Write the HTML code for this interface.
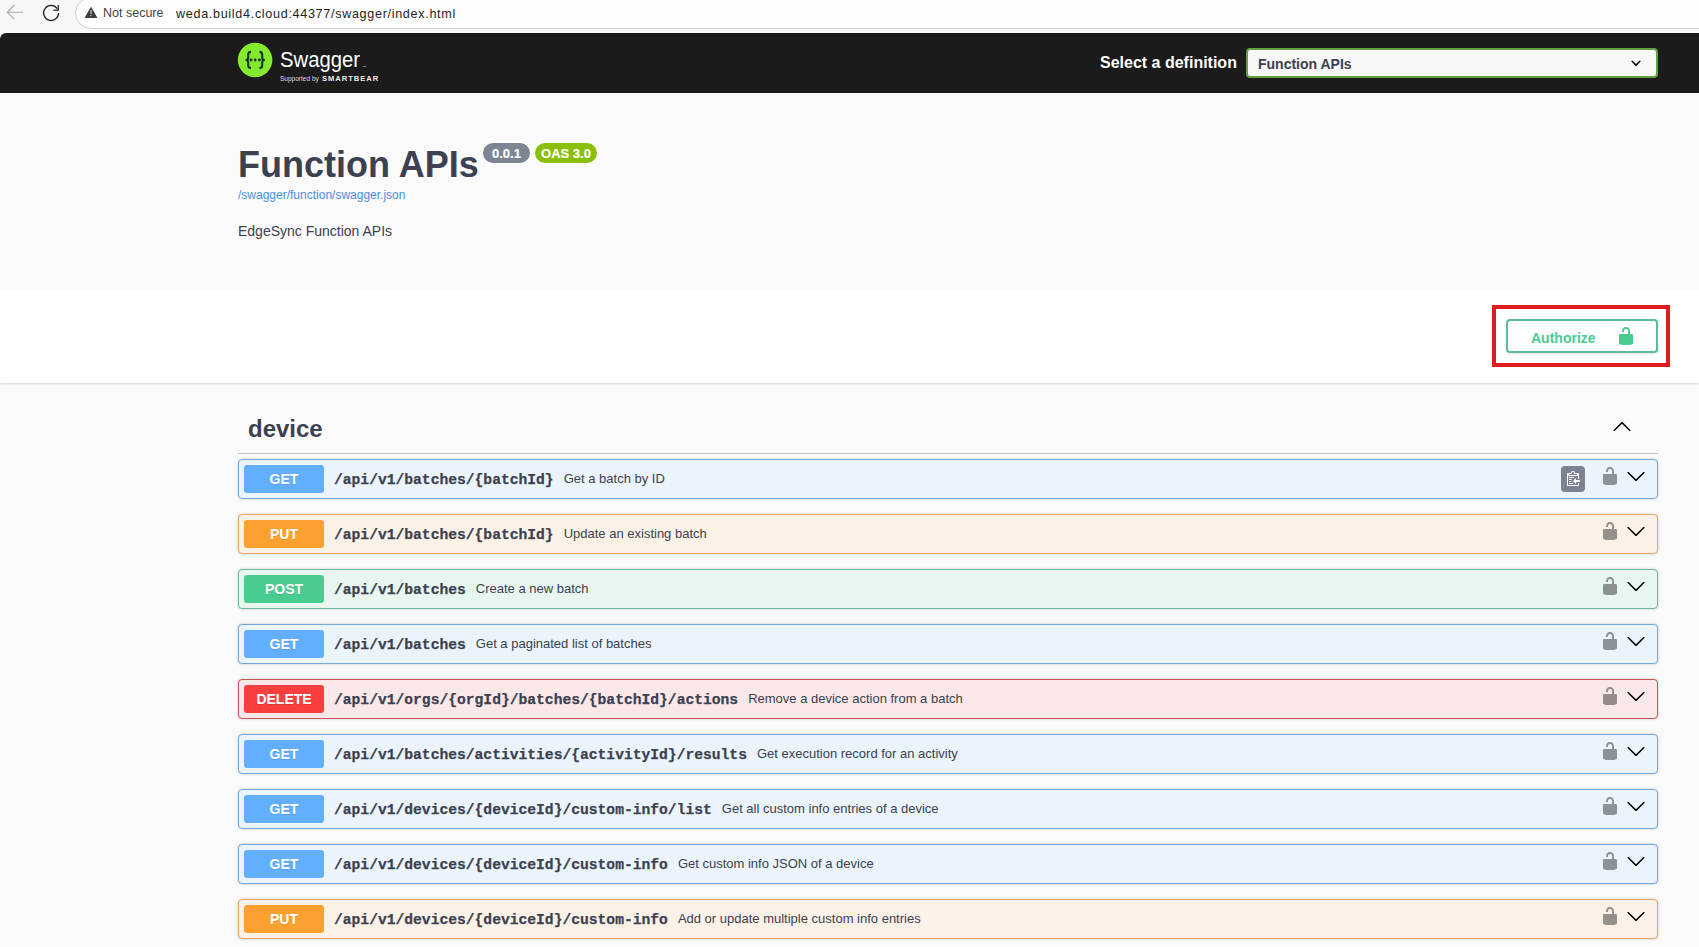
<!DOCTYPE html>
<html><head><meta charset="utf-8">
<style>
*{box-sizing:border-box}
html,body{margin:0;padding:0}
body{width:1699px;height:947px;overflow:hidden;position:relative;background:#fafafa;font-family:"Liberation Sans",sans-serif;color:#3b4151}
.abs{position:absolute}
#chrome{left:0;top:0;width:1699px;height:33px;background:#f7f7f7}
#pill{left:75px;top:-3px;width:1700px;height:32px;border:1px solid #cfcfcf;border-radius:16px;background:#fdfdfd}
#ns{left:103px;top:6px;font-size:12.5px;color:#444;white-space:nowrap}
#url{left:176px;top:7px;font-size:12.6px;letter-spacing:.68px;color:#1f1f1f;white-space:nowrap}
#topbar{left:0;top:33px;width:1699px;height:60px;background:#1b1b1b;border-top-left-radius:6px}
#sellabel{left:1100px;top:54px;font-size:16px;font-weight:bold;color:#fff;white-space:nowrap}
#select{left:1246px;top:48px;width:412px;height:30px;border:2px solid #62a03f;border-radius:4px;background:#f7f7f7}
#seltext{left:1258px;top:56px;font-size:14px;font-weight:bold;color:#3b4151;white-space:nowrap}
#title{left:238px;top:143px;font-size:36px;font-weight:bold;color:#3b4151;white-space:nowrap;line-height:44px}
.badge{top:143px;height:20px;border-radius:57px;color:#fff;font-size:13px;font-weight:bold;text-align:center;line-height:22px;-webkit-text-stroke:.2px #fff}
#b1{left:483px;width:47px;background:#7d8492}
#b2{left:535px;width:62px;background:#89bf04}
#link{left:238px;top:188px;font-size:12px;color:#4990e2;white-space:nowrap}
#desc{left:238px;top:223px;font-size:14px;color:#3b4151;white-space:nowrap}
#scheme{left:0;top:289px;width:1699px;height:94px;background:#fff;box-shadow:0 1px 2px 0 rgba(0,0,0,.15)}
#redbox{left:1492px;top:305px;width:178px;height:62px;border:4px solid #dc1d22}
#auth{left:1506px;top:319px;width:152px;height:34px;border:2px solid #5cbc98;border-radius:4px;box-shadow:0 1px 2px rgba(0,0,0,.1);background:#fff}
#authtext{left:1531px;top:330px;font-size:14px;font-weight:bold;color:#49cc90;white-space:nowrap}
#tag{left:248px;top:415px;font-size:24px;font-weight:bold;color:#3b4151;white-space:nowrap}
#tagline{left:238px;top:453px;width:1420px;height:1px;background:rgba(59,65,81,.3)}
.op{left:238px;width:1420px;height:40px;border:1px solid;border-radius:4px;box-shadow:0 0 3px rgba(0,0,0,.19)}
.get{background:#ebf3fb;border-color:#74a9e0}
.put{background:#fbf1e6;border-color:#e0a765}
.post{background:#e8f6f0;border-color:#68b89a}
.del{background:#fae7e7;border-color:#cc5256}
.m{position:absolute;left:5px;top:5px;width:80px;height:28px;border-radius:3px;color:#fff;font-size:14px;font-weight:bold;text-align:center;line-height:28px;text-shadow:0 1px 0 rgba(0,0,0,.1)}
.get .m{background:#61affe}.put .m{background:#fca130}.post .m{background:#49cc90}.del .m{background:#f93e3e}
.p{position:absolute;left:95px;top:12px;font-family:"Liberation Mono",monospace;font-size:14.65px;font-weight:bold;color:#3b4151;white-space:nowrap;-webkit-text-stroke:.25px #3b4151}
.d{font-family:"Liberation Sans",sans-serif;font-weight:normal;font-size:13px;margin-left:10px;-webkit-text-stroke:0;position:relative;top:-1px}
.lock{position:absolute;left:1361px;top:6px}
.chev{position:absolute;left:1387px;top:6px}
.copy{position:absolute;left:1322px;top:6px;width:24px;height:26px;border-radius:4px;background:#7d8293}
</style></head><body>
<div id="chrome" class="abs"></div>
<div id="pill" class="abs"></div>
<svg class="abs" style="left:0;top:0" width="75" height="33" viewBox="0 0 75 33">
<path d="M23 12.3H7.6M14.3 5L7.3 12.3l7 7" fill="none" stroke="#a8a8a8" stroke-width="1.1"/>
<path d="M57.2 8.6A7.5 7.5 0 1 0 58.6 13" fill="none" stroke="#1f1f1f" stroke-width="1.25"/>
<path d="M58.3 5v5H53.3" fill="none" stroke="#1f1f1f" stroke-width="1.25"/>
</svg>
<svg class="abs" style="left:84px;top:6px" width="14" height="13" viewBox="0 0 14 13"><path d="M7 1.8L12.5 11.5H1.5z" fill="#3c3c3c" stroke="#3c3c3c" stroke-width="1.2" stroke-linejoin="round"/><rect x="6.2" y="4" width="1.6" height="4" fill="#aaa"/><rect x="6.2" y="8.9" width="1.6" height="1.3" fill="#aaa"/></svg>
<div id="ns" class="abs">Not secure</div>
<div id="url" class="abs">weda.build4.cloud:44377/swagger/index.html</div>
<div id="topbar" class="abs"></div>
<div id="sellabel" class="abs">Select a definition</div>
<div id="select" class="abs"></div>
<div id="seltext" class="abs">Function APIs</div>
<div id="title" class="abs">Function APIs</div>
<div id="b1" class="abs badge">0.0.1</div>
<div id="b2" class="abs badge">OAS 3.0</div>
<div id="link" class="abs">/swagger/function/swagger.json</div>
<div id="desc" class="abs">EdgeSync Function APIs</div>
<div id="scheme" class="abs"></div>
<div id="redbox" class="abs"></div>
<div id="auth" class="abs"></div>
<div id="authtext" class="abs">Authorize</div>
<svg class="abs" style="left:236px;top:40px" width="150" height="46" viewBox="0 0 150 46">
<circle cx="19.1" cy="20" r="17.3" fill="#85ea2d"/>
<path d="M15 11.9c-2.1 0-2.8 1-2.8 2.8v3c0 1.3-.7 2.2-2.6 2.3 1.9.1 2.6 1 2.6 2.3v3c0 1.8.7 2.8 2.8 2.8M23.4 11.9c2.1 0 2.8 1 2.8 2.8v3c0 1.3.7 2.2 2.6 2.3-1.9.1-2.6 1-2.6 2.3v3c0 1.8-.7 2.8-2.8 2.8" fill="none" stroke="#15352c" stroke-width="2.1"/>
<circle cx="15" cy="20" r="1.4" fill="#15352c"/><circle cx="19.2" cy="20" r="1.4" fill="#15352c"/><circle cx="23.4" cy="20" r="1.4" fill="#15352c"/>
<text x="44" y="27" font-family="Liberation Sans" font-size="22" fill="#fff" textLength="80" lengthAdjust="spacingAndGlyphs">Swagger</text>
<text x="126.5" y="26.5" font-family="Liberation Sans" font-size="2.4" fill="#fff">TM</text>
<text x="44" y="41.3" font-family="Liberation Sans" font-size="6.5" fill="#ddd" textLength="38.8" lengthAdjust="spacingAndGlyphs">Supported by</text>
<text x="86" y="41.3" font-family="Liberation Sans" font-size="7.6" font-weight="bold" fill="#eee" textLength="56.3" lengthAdjust="spacing">SMARTBEAR</text>
</svg>
<svg class="abs" style="left:1626px;top:53px" width="20" height="20" viewBox="0 0 20 20"><path d="M13.418 7.859a.695.695 0 0 1 .978 0 .68.68 0 0 1 0 .969l-3.908 3.83a.697.697 0 0 1-.979 0l-3.908-3.83a.68.68 0 0 1 0-.969.695.695 0 0 1 .978 0L10 11l3.418-3.141z"/></svg>
<svg class="abs" style="left:1616px;top:326px" width="20" height="20" viewBox="0 0 20 20"><path fill="#49cc90" d="M15.8 8H14V5.6C14 2.703 12.665 1 10 1 7.334 1 6 2.703 6 5.6V6h2v-.801C8 3.754 8.797 3 10 3c1.203 0 2 .754 2 2.199V8H4c-.553 0-1 .646-1 1.199V17c0 .549.428 1.139.951 1.307l1.197.387C5.672 18.861 6.55 19 7.1 19h5.8c.549 0 1.428-.139 1.951-.307l1.196-.387c.524-.167.953-.757.953-1.306V9.199C17 8.646 16.352 8 15.8 8z"/></svg>
<div id="tag" class="abs">device</div>
<div id="tagline" class="abs"></div>
<svg class="abs" style="left:1612px;top:416px" width="20" height="20" viewBox="0 0 20 20"><path d="M17.418 14.908c.272.268.709.268.979 0s.271-.701 0-.969l-7.908-7.83a.697.697 0 0 0-.979 0l-7.908 7.83c-.27.268-.27.701 0 .969.271.268.709.268.979 0L10 7.72l7.418 7.188z"/></svg>

<!--OPS-->
<div class="abs op get" style="top:459px"><div class="m">GET</div><div class="p">/api/v1/batches/{batchId}<span class="d">Get a batch by ID</span></div><div class="copy"><svg style="position:absolute;left:3.8px;top:5px" width="15" height="16" viewBox="0 0 15 16"><g transform="translate(2,-1)"><path fill="#fff" fill-rule="evenodd" d="M2 13h4v1H2v-1zm5-6H2v1h5V7zm2 3V8l-3 3 3 3v-2h5v-2H9zM4.5 9H2v1h2.5V9zM2 12h2.5v-1H2v1zm9 1h1v2c-.02.28-.11.52-.3.7-.19.18-.42.28-.7.3H1c-.55 0-1-.45-1-1V4c0-.55.45-1 1-1h3c0-1.110.89-2 2-2 1.11 0 2 .89 2 2h3c.55 0 1 .45 1 1v5h-1V6H1v9h10v-2zM2 5h8c0-.55-.45-1-1-1H8c-.55 0-1-.45-1-1s-.45-1-1-1-1 .45-1 1-.45 1-1 1H3c-.55 0-1 .45-1 1z"/></g></svg></div><svg class="lock" width="20" height="20" viewBox="0 0 20 20"><path opacity=".4" d="M15.8 8H14V5.6C14 2.703 12.665 1 10 1 7.334 1 6 2.703 6 5.6V6h2v-.801C8 3.754 8.797 3 10 3c1.203 0 2 .754 2 2.199V8H4c-.553 0-1 .646-1 1.199V17c0 .549.428 1.139.951 1.307l1.197.387C5.672 18.861 6.55 19 7.1 19h5.8c.549 0 1.428-.139 1.951-.307l1.196-.387c.524-.167.953-.757.953-1.306V9.199C17 8.646 16.352 8 15.8 8z"/></svg><svg class="chev" width="20" height="20" viewBox="0 0 20 20"><path d="M17.418 6.109c.272-.268.709-.268.979 0s.271.701 0 .969l-7.908 7.83c-.27.268-.707.268-.979 0l-7.908-7.83c-.27-.268-.27-.701 0-.969.271-.268.709-.268.979 0L10 13.25l7.418-7.141z"/></svg></div>
<div class="abs op put" style="top:514px"><div class="m">PUT</div><div class="p">/api/v1/batches/{batchId}<span class="d">Update an existing batch</span></div><svg class="lock" width="20" height="20" viewBox="0 0 20 20"><path opacity=".4" d="M15.8 8H14V5.6C14 2.703 12.665 1 10 1 7.334 1 6 2.703 6 5.6V6h2v-.801C8 3.754 8.797 3 10 3c1.203 0 2 .754 2 2.199V8H4c-.553 0-1 .646-1 1.199V17c0 .549.428 1.139.951 1.307l1.197.387C5.672 18.861 6.55 19 7.1 19h5.8c.549 0 1.428-.139 1.951-.307l1.196-.387c.524-.167.953-.757.953-1.306V9.199C17 8.646 16.352 8 15.8 8z"/></svg><svg class="chev" width="20" height="20" viewBox="0 0 20 20"><path d="M17.418 6.109c.272-.268.709-.268.979 0s.271.701 0 .969l-7.908 7.83c-.27.268-.707.268-.979 0l-7.908-7.83c-.27-.268-.27-.701 0-.969.271-.268.709-.268.979 0L10 13.25l7.418-7.141z"/></svg></div>
<div class="abs op post" style="top:569px"><div class="m">POST</div><div class="p">/api/v1/batches<span class="d">Create a new batch</span></div><svg class="lock" width="20" height="20" viewBox="0 0 20 20"><path opacity=".4" d="M15.8 8H14V5.6C14 2.703 12.665 1 10 1 7.334 1 6 2.703 6 5.6V6h2v-.801C8 3.754 8.797 3 10 3c1.203 0 2 .754 2 2.199V8H4c-.553 0-1 .646-1 1.199V17c0 .549.428 1.139.951 1.307l1.197.387C5.672 18.861 6.55 19 7.1 19h5.8c.549 0 1.428-.139 1.951-.307l1.196-.387c.524-.167.953-.757.953-1.306V9.199C17 8.646 16.352 8 15.8 8z"/></svg><svg class="chev" width="20" height="20" viewBox="0 0 20 20"><path d="M17.418 6.109c.272-.268.709-.268.979 0s.271.701 0 .969l-7.908 7.83c-.27.268-.707.268-.979 0l-7.908-7.83c-.27-.268-.27-.701 0-.969.271-.268.709-.268.979 0L10 13.25l7.418-7.141z"/></svg></div>
<div class="abs op get" style="top:624px"><div class="m">GET</div><div class="p">/api/v1/batches<span class="d">Get a paginated list of batches</span></div><svg class="lock" width="20" height="20" viewBox="0 0 20 20"><path opacity=".4" d="M15.8 8H14V5.6C14 2.703 12.665 1 10 1 7.334 1 6 2.703 6 5.6V6h2v-.801C8 3.754 8.797 3 10 3c1.203 0 2 .754 2 2.199V8H4c-.553 0-1 .646-1 1.199V17c0 .549.428 1.139.951 1.307l1.197.387C5.672 18.861 6.55 19 7.1 19h5.8c.549 0 1.428-.139 1.951-.307l1.196-.387c.524-.167.953-.757.953-1.306V9.199C17 8.646 16.352 8 15.8 8z"/></svg><svg class="chev" width="20" height="20" viewBox="0 0 20 20"><path d="M17.418 6.109c.272-.268.709-.268.979 0s.271.701 0 .969l-7.908 7.83c-.27.268-.707.268-.979 0l-7.908-7.83c-.27-.268-.27-.701 0-.969.271-.268.709-.268.979 0L10 13.25l7.418-7.141z"/></svg></div>
<div class="abs op del" style="top:679px"><div class="m">DELETE</div><div class="p">/api/v1/orgs/{orgId}/batches/{batchId}/actions<span class="d">Remove a device action from a batch</span></div><svg class="lock" width="20" height="20" viewBox="0 0 20 20"><path opacity=".4" d="M15.8 8H14V5.6C14 2.703 12.665 1 10 1 7.334 1 6 2.703 6 5.6V6h2v-.801C8 3.754 8.797 3 10 3c1.203 0 2 .754 2 2.199V8H4c-.553 0-1 .646-1 1.199V17c0 .549.428 1.139.951 1.307l1.197.387C5.672 18.861 6.55 19 7.1 19h5.8c.549 0 1.428-.139 1.951-.307l1.196-.387c.524-.167.953-.757.953-1.306V9.199C17 8.646 16.352 8 15.8 8z"/></svg><svg class="chev" width="20" height="20" viewBox="0 0 20 20"><path d="M17.418 6.109c.272-.268.709-.268.979 0s.271.701 0 .969l-7.908 7.83c-.27.268-.707.268-.979 0l-7.908-7.83c-.27-.268-.27-.701 0-.969.271-.268.709-.268.979 0L10 13.25l7.418-7.141z"/></svg></div>
<div class="abs op get" style="top:734px"><div class="m">GET</div><div class="p">/api/v1/batches/activities/{activityId}/results<span class="d">Get execution record for an activity</span></div><svg class="lock" width="20" height="20" viewBox="0 0 20 20"><path opacity=".4" d="M15.8 8H14V5.6C14 2.703 12.665 1 10 1 7.334 1 6 2.703 6 5.6V6h2v-.801C8 3.754 8.797 3 10 3c1.203 0 2 .754 2 2.199V8H4c-.553 0-1 .646-1 1.199V17c0 .549.428 1.139.951 1.307l1.197.387C5.672 18.861 6.55 19 7.1 19h5.8c.549 0 1.428-.139 1.951-.307l1.196-.387c.524-.167.953-.757.953-1.306V9.199C17 8.646 16.352 8 15.8 8z"/></svg><svg class="chev" width="20" height="20" viewBox="0 0 20 20"><path d="M17.418 6.109c.272-.268.709-.268.979 0s.271.701 0 .969l-7.908 7.83c-.27.268-.707.268-.979 0l-7.908-7.83c-.27-.268-.27-.701 0-.969.271-.268.709-.268.979 0L10 13.25l7.418-7.141z"/></svg></div>
<div class="abs op get" style="top:789px"><div class="m">GET</div><div class="p">/api/v1/devices/{deviceId}/custom-info/list<span class="d">Get all custom info entries of a device</span></div><svg class="lock" width="20" height="20" viewBox="0 0 20 20"><path opacity=".4" d="M15.8 8H14V5.6C14 2.703 12.665 1 10 1 7.334 1 6 2.703 6 5.6V6h2v-.801C8 3.754 8.797 3 10 3c1.203 0 2 .754 2 2.199V8H4c-.553 0-1 .646-1 1.199V17c0 .549.428 1.139.951 1.307l1.197.387C5.672 18.861 6.55 19 7.1 19h5.8c.549 0 1.428-.139 1.951-.307l1.196-.387c.524-.167.953-.757.953-1.306V9.199C17 8.646 16.352 8 15.8 8z"/></svg><svg class="chev" width="20" height="20" viewBox="0 0 20 20"><path d="M17.418 6.109c.272-.268.709-.268.979 0s.271.701 0 .969l-7.908 7.83c-.27.268-.707.268-.979 0l-7.908-7.83c-.27-.268-.27-.701 0-.969.271-.268.709-.268.979 0L10 13.25l7.418-7.141z"/></svg></div>
<div class="abs op get" style="top:844px"><div class="m">GET</div><div class="p">/api/v1/devices/{deviceId}/custom-info<span class="d">Get custom info JSON of a device</span></div><svg class="lock" width="20" height="20" viewBox="0 0 20 20"><path opacity=".4" d="M15.8 8H14V5.6C14 2.703 12.665 1 10 1 7.334 1 6 2.703 6 5.6V6h2v-.801C8 3.754 8.797 3 10 3c1.203 0 2 .754 2 2.199V8H4c-.553 0-1 .646-1 1.199V17c0 .549.428 1.139.951 1.307l1.197.387C5.672 18.861 6.55 19 7.1 19h5.8c.549 0 1.428-.139 1.951-.307l1.196-.387c.524-.167.953-.757.953-1.306V9.199C17 8.646 16.352 8 15.8 8z"/></svg><svg class="chev" width="20" height="20" viewBox="0 0 20 20"><path d="M17.418 6.109c.272-.268.709-.268.979 0s.271.701 0 .969l-7.908 7.83c-.27.268-.707.268-.979 0l-7.908-7.83c-.27-.268-.27-.701 0-.969.271-.268.709-.268.979 0L10 13.25l7.418-7.141z"/></svg></div>
<div class="abs op put" style="top:899px"><div class="m">PUT</div><div class="p">/api/v1/devices/{deviceId}/custom-info<span class="d">Add or update multiple custom info entries</span></div><svg class="lock" width="20" height="20" viewBox="0 0 20 20"><path opacity=".4" d="M15.8 8H14V5.6C14 2.703 12.665 1 10 1 7.334 1 6 2.703 6 5.6V6h2v-.801C8 3.754 8.797 3 10 3c1.203 0 2 .754 2 2.199V8H4c-.553 0-1 .646-1 1.199V17c0 .549.428 1.139.951 1.307l1.197.387C5.672 18.861 6.55 19 7.1 19h5.8c.549 0 1.428-.139 1.951-.307l1.196-.387c.524-.167.953-.757.953-1.306V9.199C17 8.646 16.352 8 15.8 8z"/></svg><svg class="chev" width="20" height="20" viewBox="0 0 20 20"><path d="M17.418 6.109c.272-.268.709-.268.979 0s.271.701 0 .969l-7.908 7.83c-.27.268-.707.268-.979 0l-7.908-7.83c-.27-.268-.27-.701 0-.969.271-.268.709-.268.979 0L10 13.25l7.418-7.141z"/></svg></div>
<!--/OPS-->
</body></html>
